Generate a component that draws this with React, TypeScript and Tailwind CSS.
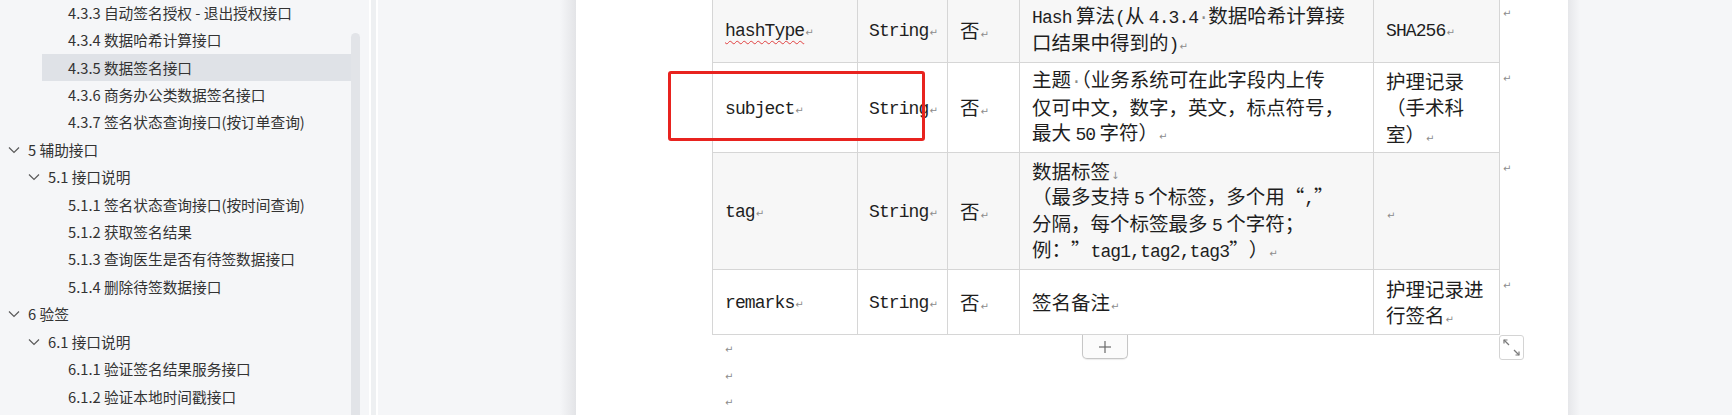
import React from "react";

const M = ({ children }: { children: React.ReactNode }) => (
  <span className="font-['Liberation_Mono',monospace] text-[18px] tracking-[-0.9px]">{children}</span>
);

const P = () => (
  <span className="ml-[1px] font-['DejaVu_Sans',sans-serif] text-[10px] leading-none text-[#8c8c8c]">↵</span>
);

const Dot = () => (
  <span className="font-['Liberation_Mono',monospace] text-[18px] tracking-[-0.9px] text-[#8c8c8c]">·</span>
);

const QL = () => <span className="inline-block w-[19.5px] text-right">“</span>;
const QR = () => <span className="inline-block w-[19.5px] text-left">”</span>;
const QRr = () => <span className="inline-block w-[19.5px] text-right">”</span>;

const Chevron = () => (
  <svg width="12" height="8" viewBox="0 0 12 8" className="block">
    <polyline points="1,1.5 6,6.5 11,1.5" fill="none" stroke="#5a5a5a" strokeWidth="1.2" />
  </svg>
);

type NavItem = { level: number; text: string; chevron?: boolean; selected?: boolean };

const nav: NavItem[] = [
  { level: 3, text: "4.3.3 自动签名授权 - 退出授权接口" },
  { level: 3, text: "4.3.4 数据哈希计算接口" },
  { level: 3, text: "4.3.5 数据签名接口", selected: true },
  { level: 3, text: "4.3.6 商务办公类数据签名接口" },
  { level: 3, text: "4.3.7 签名状态查询接口(按订单查询)" },
  { level: 1, text: "5 辅助接口", chevron: true },
  { level: 2, text: "5.1 接口说明", chevron: true },
  { level: 3, text: "5.1.1 签名状态查询接口(按时间查询)" },
  { level: 3, text: "5.1.2 获取签名结果" },
  { level: 3, text: "5.1.3 查询医生是否有待签数据接口" },
  { level: 3, text: "5.1.4 删除待签数据接口" },
  { level: 1, text: "6 验签", chevron: true },
  { level: 2, text: "6.1 接口说明", chevron: true },
  { level: 3, text: "6.1.1 验证签名结果服务接口" },
  { level: 3, text: "6.1.2 验证本地时间戳接口" },
];

const indent: Record<number, string> = { 1: "ml-[2px]", 2: "ml-[22px]", 3: "ml-[42px]" };

function Sidebar() {
  return (
    <div className="flex h-full w-[369px] shrink-0 bg-[#f5f6f8]">
      <div className="-mt-[1px] w-[351px] shrink-0">
        {nav.map((n, i) => (
          <div key={i} className="h-[27.43px] w-full">
            <div
              className={`${indent[n.level]} flex h-full items-center ${n.selected ? "bg-[#dfe2e7]" : ""}`}
            >
              <div className="flex w-[26px] shrink-0 items-center pl-[6px]">{n.chevron ? <Chevron /> : null}</div>
              <span className="whitespace-nowrap font-['Noto_Sans_CJK_SC',sans-serif] text-[14.7px] text-[#333]">
                {n.text}
              </span>
            </div>
          </div>
        ))}
      </div>
      <div className="flex w-[9px] shrink-0 flex-col pt-[33px]">
        <div className="flex-1 rounded-t-full bg-[#e2e4e8]" />
      </div>
    </div>
  );
}

type Cell = React.ReactNode;

function Row({ cells, h, shade, extra }: { cells: Cell[]; h: string; shade?: boolean; extra?: string }) {
  const bg = shade ? "bg-[#f7f7f7]" : "bg-white";
  const base = `flex items-center border-b border-r border-[#d6d6d6] ${bg} text-[#1e1e1e]`;
  return (
    <div className={`grid grid-cols-[146px_90px_72px_354px_126px_20px] ${h} ${extra ?? ""}`}>
      <div className={`${base} border-l pl-[12px]`}>{cells[0]}</div>
      <div className={`${base} pl-[11px]`}>{cells[1]}</div>
      <div className={`${base} pl-[12px]`}>{cells[2]}</div>
      <div className={`${base} pl-[12px]`}>{cells[3]}</div>
      <div className={`${base} pl-[12px]`}>{cells[4]}</div>
      <div className="pl-[3px] pt-[11px] font-['DejaVu_Sans',sans-serif] text-[10px] leading-none text-[#8c8c8c]">↵</div>
    </div>
  );
}

const Lines = ({ children }: { children: React.ReactNode }) => (
  <div className="whitespace-nowrap font-['Noto_Sans_CJK_SC',sans-serif] text-[19.5px] leading-[26.5px]">{children}</div>
);

const L = ({ children }: { children: React.ReactNode }) => (
  <div className="flex h-[26.5px] items-center">
    <div className="leading-[26.5px]">{children}</div>
  </div>
);

const Fou = () => (
  <Lines>
    <L>
      否<P />
    </L>
  </Lines>
);

const Str = () => (
  <Lines>
    <L>
      <M>String</M>
      <P />
    </L>
  </Lines>
);

function Table() {
  return (
    <div className="relative w-[808px]">
      <Row
        h="h-[65px]"
        extra="-mt-[2px]"
        shade
        cells={[
          <Lines>
            <L>
              <span className="underline decoration-[#e04040] decoration-wavy decoration-1 underline-offset-[4px]">
                <M>hashType</M>
              </span>
              <P />
            </L>
          </Lines>,
          <Str />,
          <Fou />,
          <Lines>
            <L>
              <M>Hash</M> 算法<M>(</M>从 <M>4.3.4</M>
              <Dot />
              数据哈希计算接
            </L>
            <L>
              口结果中得到的<M>)</M>
              <P />
            </L>
          </Lines>,
          <Lines>
            <L>
              <M>SHA256</M>
              <P />
            </L>
          </Lines>,
        ]}
      />
      <Row
        h="h-[90px]"
        cells={[
          <Lines>
            <L>
              <M>subject</M>
              <P />
            </L>
          </Lines>,
          <Str />,
          <Fou />,
          <Lines>
            <L>
              主题
              <Dot />
              （业务系统可在此字段内上传
            </L>
            <L>仅可中文，数字，英文，标点符号，</L>
            <L>
              最大 <M>50</M> 字符）
              <P />
            </L>
          </Lines>,
          <Lines>
            <L>护理记录</L>
            <L>（手术科</L>
            <L>
              室）
              <P />
            </L>
          </Lines>,
        ]}
      />
      <Row
        h="h-[117px]"
        shade
        cells={[
          <Lines>
            <L>
              <M>tag</M>
              <P />
            </L>
          </Lines>,
          <Str />,
          <Fou />,
          <Lines>
            <L>
              数据标签
              <span className="ml-[1px] font-['DejaVu_Sans',sans-serif] text-[10px] leading-none text-[#8c8c8c]">↓</span>
            </L>
            <L>
              （最多支持 <M>5</M> 个标签，多个用<QL />
              <M>,</M>
              <QR />
            </L>
            <L>
              分隔，每个标签最多 <M>5</M> 个字符；
            </L>
            <L>
              例：<QRr />
              <M>tag1,tag2,tag3</M>
              <QR />）
              <P />
            </L>
          </Lines>,
          <Lines>
            <L>
              <P />
            </L>
          </Lines>,
        ]}
      />
      <Row
        h="h-[65px]"
        cells={[
          <Lines>
            <L>
              <M>remarks</M>
              <P />
            </L>
          </Lines>,
          <Str />,
          <Fou />,
          <Lines>
            <L>
              签名备注
              <P />
            </L>
          </Lines>,
          <Lines>
            <L>护理记录进</L>
            <L>
              行签名
              <P />
            </L>
          </Lines>,
        ]}
      />
      <div className="absolute left-[370px] top-full flex h-[24px] w-[46px] items-center justify-center rounded-b-[5px] border border-t-0 border-[#c6c6c6] bg-[#fbfbfb] shadow-[0_1px_1px_rgba(0,0,0,0.08)]">
        <svg width="14" height="14" viewBox="0 0 14 14">
          <line x1="7" y1="1" x2="7" y2="13" stroke="#6a6a6a" strokeWidth="1.2" />
          <line x1="1" y1="7" x2="13" y2="7" stroke="#6a6a6a" strokeWidth="1.2" />
        </svg>
      </div>
      <div className="absolute left-[787px] top-full h-[25px] w-[25px] rounded-[3px] border border-[#d4d4d4] bg-white">
        <svg width="23" height="23" viewBox="0 0 23 23" className="block">
          <g stroke="#7a7a7a" strokeWidth="1.2" fill="none">
            <line x1="4" y1="4" x2="9" y2="9" />
            <polyline points="4,7.5 4,4 7.5,4" />
            <line x1="14" y1="14" x2="19" y2="19" />
            <polyline points="19,15.5 19,19 15.5,19" />
          </g>
        </svg>
      </div>
    </div>
  );
}

export default function App() {
  return (
    <div className="flex h-[415px] w-[1732px] overflow-hidden bg-[#f5f6f8]">
      <Sidebar />
      <div className="w-[2px] shrink-0 bg-white" />
      <div className="w-[5px] shrink-0 bg-[#eef0f2]" />
      <div className="w-[2px] shrink-0 bg-white" />
      <div className="w-[182px] shrink-0 bg-[#f5f6f8]" />
      <div className="w-[16px] shrink-0 bg-gradient-to-r from-[#f5f6f8] to-[#e3e4e7]" />
      <div className="relative h-full w-[992px] shrink-0 overflow-hidden bg-white">
        <div className="pl-[136px]">
          <Table />
          <div className="ml-[13px] pt-[2px]">
            {[0, 1, 2].map((i) => (
              <div key={i} className="h-[26.5px] font-['DejaVu_Sans',sans-serif] text-[10px] leading-[26.5px] text-[#8c8c8c]">
                ↵
              </div>
            ))}
          </div>
        </div>
        <div className="absolute left-[92px] top-[71px] h-[70px] w-[257px] rounded-[3px] border-[3px] border-[#e8231f]" />
      </div>
      <div className="w-[12px] shrink-0 bg-gradient-to-r from-[#e6e7ea] to-[#f5f6f8]" />
      <div className="flex-1 bg-[#f5f6f8]" />
    </div>
  );
}
